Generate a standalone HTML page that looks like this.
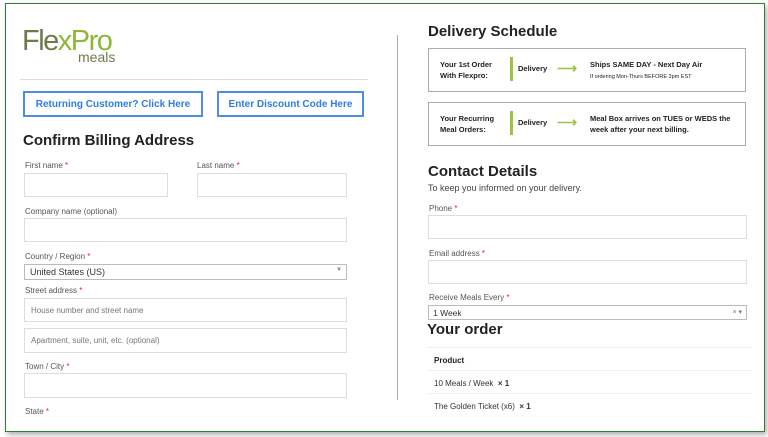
<!DOCTYPE html>
<html><head><style>
*{box-sizing:border-box;margin:0;padding:0}
body{width:768px;height:437px;background:#fff;position:relative;overflow:hidden;font-family:"Liberation Sans",sans-serif;color:#333}
.frame{position:absolute;left:5px;top:3px;width:760px;height:429px;border:1.5px solid #2e7d32;box-shadow:2px 3px 5px rgba(0,0,0,.3)}
.a{position:absolute}
.lbl{position:absolute;font-size:8px;color:#555}
.lbl b{color:#d22;font-weight:normal}
.in{position:absolute;border:1px solid #ddd;background:#fff}
.btn{position:absolute;border:2px solid #4a8ee8;color:#2f7de0;font-weight:bold;font-size:10px;text-align:center;line-height:23px}
h2{position:absolute;font-size:15px;font-weight:bold;color:#222}
.box{position:absolute;left:428px;width:318px;height:44px;border:1.5px solid #aaa;font-size:7.5px;font-weight:bold;color:#222}
.box .c1{position:absolute;left:11px;top:10px;line-height:11px}
.box .bar{position:absolute;left:81px;top:8px;width:3px;height:24px;background:#9bc53d}
.box .d{position:absolute;left:89px;top:15px}
.box .ar{position:absolute;left:128px;top:11px;color:#9bc53d;font-size:14px}
.box .c3{position:absolute;left:161px;top:10px;line-height:11px}
.row{position:absolute;left:427px;width:325px;height:23px;border-top:1px solid #eee;font-size:8px;padding:8px 0 0 7px;color:#333}
</style></head><body>
<div class="frame"></div>
<div class="a" style="left:22px;top:25px;font-size:29px;letter-spacing:-1.5px;color:#6e7a4a">Fle<span style="color:#8bb83a">x</span><span style="color:#8bb83a">Pro</span></div>
<div class="a" style="left:78px;top:49px;font-size:14px;color:#6e7a4a">meals</div>
<div class="a" style="left:20px;top:79px;width:348px;height:1px;background:#ddd"></div>
<div class="btn" style="left:23px;top:91px;width:180px;height:26px">Returning Customer? Click Here</div>
<div class="btn" style="left:217px;top:91px;width:147px;height:26px">Enter Discount Code Here</div>
<h2 style="left:23px;top:132px">Confirm Billing Address</h2>
<div class="lbl" style="left:25px;top:161px">First name <b>*</b></div>
<div class="in" style="left:24px;top:173px;width:144px;height:24px"></div>
<div class="lbl" style="left:197px;top:161px">Last name <b>*</b></div>
<div class="in" style="left:197px;top:173px;width:150px;height:24px"></div>
<div class="lbl" style="left:25px;top:207px">Company name (optional)</div>
<div class="in" style="left:24px;top:218px;width:323px;height:24px"></div>
<div class="lbl" style="left:25px;top:252px">Country / Region <b>*</b></div>
<div class="in" style="left:24px;top:264px;width:323px;height:16px;border-color:#bbb;font-size:9px;padding:2px 0 0 5px;color:#333">United States (US)<span style="position:absolute;right:4px;top:2px;font-size:6px;color:#888">▼</span></div>
<div class="lbl" style="left:25px;top:286px">Street address <b>*</b></div>
<div class="in" style="left:24px;top:298px;width:323px;height:24px;font-size:8px;color:#777;padding:7px 0 0 6px">House number and street name</div>
<div class="in" style="left:24px;top:328px;width:323px;height:25px;font-size:8px;color:#777;padding:7px 0 0 6px">Apartment, suite, unit, etc. (optional)</div>
<div class="lbl" style="left:25px;top:362px">Town / City <b>*</b></div>
<div class="in" style="left:24px;top:373px;width:323px;height:25px"></div>
<div class="lbl" style="left:25px;top:407px">State <b>*</b></div>
<div class="a" style="left:397px;top:35px;width:1px;height:365px;background:#aaa"></div>
<h2 style="left:428px;top:23px">Delivery Schedule</h2>
<div class="box" style="top:48px"><div class="c1">Your 1st Order<br>With Flexpro:</div><div class="bar"></div><div class="d">Delivery</div><div class="ar">⟶</div><div class="c3">Ships SAME DAY - Next Day Air<br><span style="font-weight:normal;font-size:5.5px">If ordering Mon-Thurs BEFORE 3pm EST</span></div></div>
<div class="box" style="top:102px"><div class="c1">Your Recurring<br>Meal Orders:</div><div class="bar"></div><div class="d">Delivery</div><div class="ar">⟶</div><div class="c3">Meal Box arrives on TUES or WEDS the<br>week after your next billing.</div></div>
<h2 style="left:428px;top:163px">Contact Details</h2>
<div class="a" style="left:428px;top:183px;font-size:9px;color:#444">To keep you informed on your delivery.</div>
<div class="lbl" style="left:429px;top:204px">Phone <b>*</b></div>
<div class="in" style="left:428px;top:215px;width:319px;height:24px"></div>
<div class="lbl" style="left:429px;top:249px">Email address <b>*</b></div>
<div class="in" style="left:428px;top:260px;width:319px;height:24px"></div>
<div class="lbl" style="left:429px;top:293px">Receive Meals Every <b>*</b></div>
<div class="in" style="left:428px;top:305px;width:319px;height:15px;border-color:#bbb;font-size:8.5px;padding:2px 0 0 4px;color:#333">1 Week<span style="position:absolute;right:4px;top:2px;font-size:7px;color:#777">× ▾</span></div>
<h2 style="left:427px;top:321px">Your order</h2>
<div class="row" style="top:347px;font-weight:bold;color:#222">Product</div>
<div class="row" style="top:370px">10 Meals / Week &nbsp;<b>× 1</b></div>
<div class="row" style="top:393px">The Golden Ticket (x6) &nbsp;<b>× 1</b></div>
</body></html>
